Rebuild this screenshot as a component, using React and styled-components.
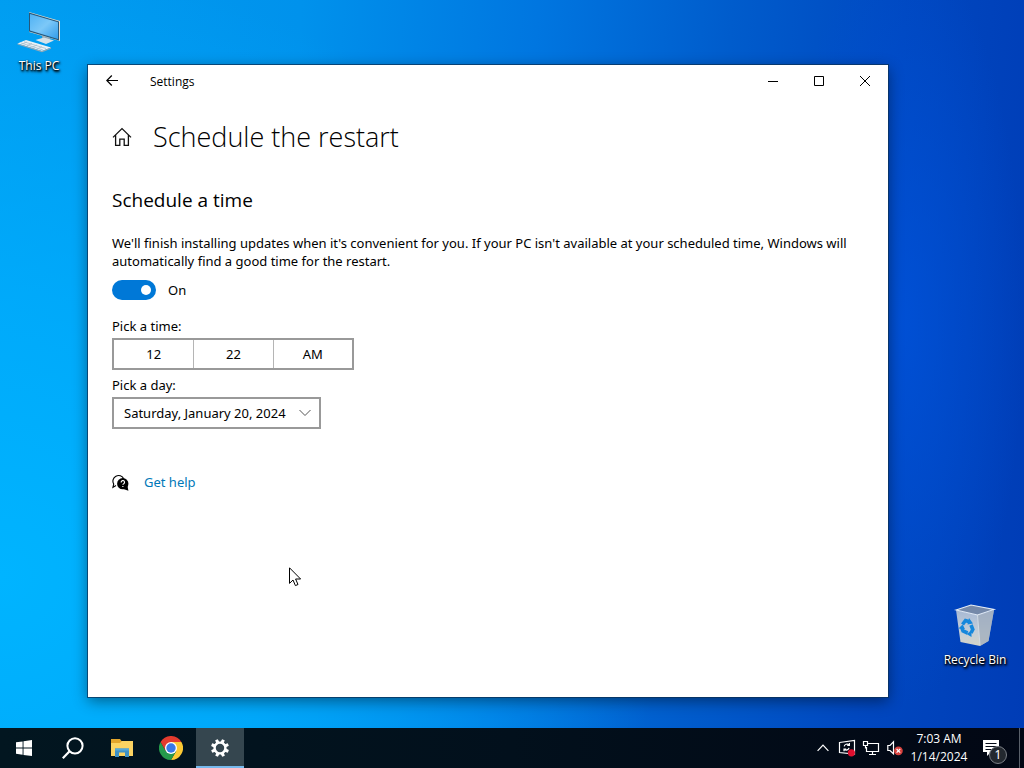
import React, { useState } from "react";
import styled, { createGlobalStyle } from "styled-components";

const days = [
  "Sunday, January 14, 2024",
  "Monday, January 15, 2024",
  "Tuesday, January 16, 2024",
  "Wednesday, January 17, 2024",
  "Thursday, January 18, 2024",
  "Friday, January 19, 2024",
  "Saturday, January 20, 2024"
];

const SettingsWindow = () => {
  const [scheduled, setScheduled] = useState(true);
  const [day, setDay] = useState("Saturday, January 20, 2024");

  return (
    <Window>
      <TitleBar>
        <BackButton aria-label="Back">
          <svg width="12" height="12" viewBox="0 0 12 12">
            <path d="M12 5.5H.8M5.8 .5L.8 5.5L5.8 10.5" />
          </svg>
        </BackButton>
        <WindowTitle>Settings</WindowTitle>
        <CaptionButton aria-label="Minimize">
          <svg width="12" height="12" viewBox="0 0 12 12">
            <path d="M1 6.5H11" />
          </svg>
        </CaptionButton>
        <CaptionButton aria-label="Maximize">
          <svg width="12" height="12" viewBox="0 0 12 12">
            <path d="M1.5 1.5H10.5V10.5H1.5Z" />
          </svg>
        </CaptionButton>
        <CaptionButton aria-label="Close">
          <svg width="12" height="12" viewBox="0 0 12 12">
            <path d="M1 1L11 11M11 1L1 11" />
          </svg>
        </CaptionButton>
      </TitleBar>

      <Content>
        <Header>
          <HomeButton aria-label="Home">
            <svg width="20" height="20" viewBox="0 0 20 20">
              <path d="M1 10.4L10 1.6L19 10.4M3.6 8.2V18.4H7.8V12.2H12.2V18.4H16.4V8.2" />
            </svg>
          </HomeButton>
          <h1>Schedule the restart</h1>
        </Header>

        <h2>Schedule a time</h2>
        <Description>
          We'll finish installing updates when it's convenient for you. If your
          PC isn't available at your scheduled time, Windows will automatically
          find a good time for the restart.
        </Description>

        <ToggleLabel>
          <Toggle
            type="checkbox"
            role="switch"
            checked={scheduled}
            onChange={e => setScheduled(e.target.checked)}
          />
          {scheduled ? "On" : "Off"}
        </ToggleLabel>

        <FieldLabel as="div" id="time-label">
          Pick a time:
        </FieldLabel>
        <TimePicker role="group" aria-labelledby="time-label">
          <TimePart>12</TimePart>
          <TimePart>22</TimePart>
          <TimePart>AM</TimePart>
        </TimePicker>

        <FieldLabel htmlFor="day">Pick a day:</FieldLabel>
        <SelectWrap>
          <Select id="day" value={day} onChange={e => setDay(e.target.value)}>
            {days.map(d => (
              <option key={d}>{d}</option>
            ))}
          </Select>
          <svg width="12" height="8" viewBox="0 0 12 8">
            <path d="M.5 1L6 6.5L11.5 1" />
          </svg>
        </SelectWrap>

        <Help>
          <svg width="17" height="17" viewBox="0 0 18 18">
            <path
              d="M4.2 12.2L1 14.2L1.8 10.6A6 6 0 1 1 12.4 5"
              fill="none"
              stroke="#000"
              strokeWidth="1.2"
            />
            <path d="M12 16L17.4 17.8L16.4 12.6Z" />
            <circle cx="11.4" cy="10.2" r="6" />
            <path
              d="M9.7 9A1.8 1.8 0 1 1 12.4 10.3Q11.5 10.7 11.5 11.5M11.5 12.6V13.8"
              fill="none"
              stroke="#fff"
              strokeWidth="1.2"
            />
          </svg>
          <a href="#help">Get help</a>
        </Help>
      </Content>
    </Window>
  );
};

const ThisPc = () => (
  <DesktopIcon $left="0" $top="8px">
    <svg width="48" height="48" viewBox="0 0 48 48">
      <defs>
        <linearGradient id="screen" x1="0" y1="0" x2="1" y2="1">
          <stop offset="0" stopColor="#4fb2f4" />
          <stop offset=".5" stopColor="#7cc8f8" />
          <stop offset="1" stopColor="#329cea" />
        </linearGradient>
      </defs>
      <path d="M27 27L35 29.5V33L31 34L27 32Z" fill="#8fa8b8" />
      <path d="M14 4L45 13V33L14 24Z" fill="#eadfce" />
      <path d="M14 4.5L44 13.5V32.5L14 23.5Z" fill="#25587c" />
      <path d="M15 6L43 14.3V31L15 22.6Z" fill="url(#screen)" />
      <path d="M20.5 32L29 29.5L39 32.5L31 36Z" fill="#d5e2e9" />
      <path d="M2.5 35.5L11 32L36 39.5L27 43Z" fill="#e9f2f7" />
      <path d="M2.5 35.5V36.5L27 44.3L36 40.7V39.5L27 43Z" fill="#91a8b7" />
      <path
        d="M7 36L12 34M12 37.6L17 35.5M17 39.2L22 37M22 41L27 38.7M6 35L28 42M9 33.8L31 40.5"
        stroke="#a8bdca"
        strokeWidth=".8"
      />
    </svg>
    <span>This PC</span>
  </DesktopIcon>
);

const RecycleBin = () => (
  <DesktopIcon $right="10px" $bottom="59px">
    <svg width="48" height="48" viewBox="0 0 48 48">
      <defs>
        <linearGradient id="bin" x1="0" y1="0" x2="0" y2="1">
          <stop offset="0" stopColor="#a6b8d4" />
          <stop offset=".6" stopColor="#c4ced8" />
          <stop offset="1" stopColor="#d3d4c8" />
        </linearGradient>
      </defs>
      <path d="M5 8L9.5 40L29 44L37.5 39L43 8L26.5 13Z" fill="url(#bin)" />
      <path d="M26.5 13L43 8L37.5 39L29 44Z" fill="#9eabbb" opacity=".7" />
      <path d="M5 8L20 3L43 7.5L26.5 13Z" fill="#7589a9" />
      <path
        d="M5 8L20 3L43 7.5L26.5 13Z"
        fill="none"
        stroke="#e5edf6"
        strokeWidth="1.1"
      />
      <path d="M26.5 13L29 43" stroke="#d9e2ea" strokeWidth=".8" />
      <g fill="none" stroke="#1688dc" strokeWidth="3.6">
        <path d="M11.5 22.5L14.5 18.5L18.5 19.8" />
        <path d="M20 23L21.8 27.5L20 31" />
        <path d="M16.6 31L12 29L10.6 25" />
      </g>
      <path
        d="M18 16L22 21.5L16.5 22.5ZM20.5 28.5L15.5 32L20.5 35ZM7.5 26.5L11.5 22.5L14 27Z"
        fill="#1688dc"
      />
    </svg>
    <span>Recycle Bin</span>
  </DesktopIcon>
);

const Taskbar = () => (
  <Bar>
    <TaskButton aria-label="Start">
      <svg width="16" height="16" viewBox="0 0 16 16" fill="#fff">
        <path d="M0 2.3L6.6 1.4V7.6H0ZM7.5 1.2L16 0V7.6H7.5ZM0 8.5H6.6V14.7L0 13.8ZM7.5 8.5H16V16L7.5 14.9Z" />
      </svg>
    </TaskButton>
    <TaskButton aria-label="Search">
      <svg width="22" height="22" viewBox="0 0 22 22" fill="none">
        <circle cx="13" cy="8.8" r="7.6" stroke="#fff" strokeWidth="2" />
        <path d="M7.8 14L.8 21.2" stroke="#fff" strokeWidth="2.2" />
      </svg>
    </TaskButton>
    <TaskButton aria-label="File Explorer">
      <svg width="22" height="18" viewBox="0 0 22 18">
        <path d="M0 0H9L10.5 2H22V17H0Z" fill="#e3a62c" />
        <path d="M0 4H9L11 2H22V17H0Z" fill="#fcd462" />
        <path d="M4 18V9.5H18V18H14V13.5H8V18Z" fill="#3f92c5" />
        <path d="M4 9.5H18V11.5H4Z" fill="#56a9d9" />
      </svg>
    </TaskButton>
    <TaskButton aria-label="Google Chrome">
      <svg width="24" height="24" viewBox="0 0 24 24">
        <path d="M12 12L22.4 6A12 12 0 0 1 12 24L17.2 15Z" fill="#fcc934" />
        <path d="M12 12L17.2 15L12 24A12 12 0 0 1 1.6 6L6.8 15Z" fill="#259a4b" />
        <path d="M12 6H22.4L17.2 15L12 12Z" fill="#fcc934" />
        <path d="M1.6 6A12 12 0 0 1 22.4 6H12L6.8 15Z" fill="#e33b2e" />
        <circle cx="12" cy="12" r="6" fill="#fff" />
        <circle cx="12" cy="12" r="4.7" fill="#3979e8" />
      </svg>
    </TaskButton>
    <TaskButton aria-label="Settings" $active>
      <svg width="18" height="18" viewBox="-9 -9 18 18">
        <circle r="5.4" fill="none" stroke="#fff" strokeWidth="2.4" />
        {[22, 67, 112, 157, 202, 247, 292, 337].map(a => (
          <path
            key={a}
            d="M-1.7 -5.8L-1.4 -9H1.4L1.7 -5.8Z"
            fill="#fff"
            transform={`rotate(${a})`}
          />
        ))}
      </svg>
    </TaskButton>

    <Tray>
      <TrayButton aria-label="Show hidden icons">
        <svg width="12" height="8" viewBox="0 0 12 8">
          <path d="M.6 6.8L6 1.2L11.4 6.8" />
        </svg>
      </TrayButton>
      <TrayButton aria-label="Update status">
        <svg width="18" height="18" viewBox="0 0 18 18">
          <path d="M1.5 3.5L16.5 1.5V15L1.5 13.5Z" />
          <path d="M6.2 7.4A2.8 2.8 0 0 1 11 6M11.4 4V6.4H9.2M11 8.8A2.8 2.8 0 0 1 6.4 10.4M6 12.2V10H8.2" />
          <circle cx="13.4" cy="13.8" r="3.6" fill="#e0102f" stroke="none" />
        </svg>
      </TrayButton>
      <TrayButton aria-label="Network">
        <svg width="18" height="16" viewBox="0 0 18 16">
          <path d="M5.5 3.5H16.5V11.5H4.5V7M7 14.5H14M10.5 11.5V14.5" />
          <path d="M1.5 1.5H5.5V5.5H1.5ZM3.5 5.5V8.5" />
        </svg>
      </TrayButton>
      <TrayButton aria-label="Volume muted">
        <svg width="16" height="16" viewBox="0 0 16 16">
          <path d="M.8 5.5H3L6.5 1.8V13.8L3 10.5H.8Z" />
          <circle cx="11.4" cy="10.8" r="4.4" fill="#d8423e" stroke="none" />
          <path d="M9.6 9L13.2 12.6M13.2 9L9.6 12.6" />
        </svg>
      </TrayButton>
      <Clock>
        <span>7:03 AM</span>
        <span>1/14/2024</span>
      </Clock>
      <Notifications aria-label="Notifications">
        <svg width="18" height="18" viewBox="0 0 18 18">
          <path d="M1 1H17V13H9L5 17V13H1Z" fill="#fff" />
          <path d="M3.5 4.5H14.5M3.5 7.5H14.5M3.5 10.5H10" stroke="#050b18" />
        </svg>
        <Badge>1</Badge>
      </Notifications>
      <ShowDesktop aria-label="Show desktop" />
    </Tray>
  </Bar>
);

const Pointer = () => (
  <Cursor width="13" height="20" viewBox="0 0 13 20" aria-hidden="true">
    <path d="M.5 .8V16.4L4 13L6.4 18.6L9 17.5L6.6 12H11.6Z" />
  </Cursor>
);

const App = () => (
  <Screen>
    <GlobalStyle />
    <Desktop>
      <ThisPc />
      <RecycleBin />
      <SettingsWindow />
      <Pointer />
    </Desktop>
    <Taskbar />
  </Screen>
);

export default App;

// styles

const GlobalStyle = createGlobalStyle`
  * {
    box-sizing: border-box;
  }

  body {
    margin: 0;
    font-family: "Noto Sans", "Open Sans", sans-serif;
    font-size: 13px;
    line-height: 18px;
    color: #000;
  }

  button,
  select,
  input {
    margin: 0;
    font: inherit;
    color: inherit;
  }

  svg {
    display: block;
    flex-shrink: 0;
  }
`;

const Screen = styled.div`
  display: flex;
  flex-direction: column;
  height: 100vh;
  overflow: hidden;
  background: radial-gradient(
      ellipse 65% 80% at 0% 75%,
      #00b4ff 0%,
      rgba(0, 176, 255, 0.7) 45%,
      rgba(0, 150, 245, 0) 100%
    ),
    radial-gradient(
      ellipse 12% 50% at 88% 42%,
      rgba(0, 82, 218, 0.8) 0%,
      rgba(0, 82, 218, 0) 100%
    ),
    linear-gradient(
      94deg,
      #009cf0 0%,
      #0092ec 28%,
      #0076e0 50%,
      #005ccc 68%,
      #0048c0 84%,
      #003cb6 100%
    );
`;

const Desktop = styled.main`
  position: relative;
  flex: 1;
`;

const DesktopIcon = styled.div`
  position: absolute;
  left: ${props => props.$left};
  right: ${props => props.$right};
  top: ${props => props.$top};
  bottom: ${props => props.$bottom};
  display: flex;
  flex-direction: column;
  align-items: center;
  min-width: 78px;
  font-family: "Open Sans", sans-serif;
  font-size: 12px;
  color: #fff;
  text-shadow: 1px 1px 2px #000, 0 1px 2px #000, 1px 2px 3px #000;

  svg {
    margin-bottom: 1px;
  }
`;

const Window = styled.section`
  position: absolute;
  top: 65px;
  right: 136px;
  bottom: 31px;
  left: 88px;
  background: #fff;
  box-shadow: 0 0 0 1px rgba(10, 50, 90, 0.75), 0 4px 14px rgba(0, 0, 0, 0.45);
`;

const TitleBar = styled.header`
  display: flex;
  height: 33px;
`;

const CaptionButton = styled.button`
  display: flex;
  align-items: center;
  justify-content: center;
  width: 46px;
  height: 32px;
  padding: 0;
  border: none;
  background: none;

  path {
    fill: none;
    stroke: #000;
  }
`;

const BackButton = styled(CaptionButton)`
  width: 48px;

  path {
    stroke-width: 1.2;
  }
`;

const WindowTitle = styled.span`
  flex: 1;
  padding-left: 14px;
  font-family: "Open Sans", sans-serif;
  font-size: 12px;
  line-height: 33px;
`;

const Content = styled.div`
  padding: 21px 24px;

  h2 {
    margin: 33px 0 22px;
    font-family: "Open Sans", sans-serif;
    font-size: 19px;
    font-weight: 400;
    line-height: 24px;
  }
`;

const Header = styled.div`
  display: flex;
  align-items: center;
  gap: 21px;

  h1 {
    margin: 0;
    font-family: "Open Sans", sans-serif;
    font-size: 27px;
    font-weight: 300;
    line-height: 36px;
  }
`;

const HomeButton = styled.button`
  padding: 0;
  border: none;
  background: none;

  path {
    fill: none;
    stroke: #111;
    stroke-width: 1.3;
  }
`;

const Description = styled.p`
  margin: 0 0 10px;
`;

const ToggleLabel = styled.label`
  display: flex;
  align-items: center;
  gap: 12px;
  width: fit-content;
  height: 20px;
  margin-bottom: 17px;
`;

const Toggle = styled.input`
  appearance: none;
  display: flex;
  align-items: center;
  justify-content: ${props => (props.checked ? "flex-end" : "flex-start")};
  width: 44px;
  height: 20px;
  padding: 0 5px;
  border-radius: 10px;
  background: ${props => (props.checked ? "#0078d7" : "#999")};

  &::before {
    content: "";
    width: 10px;
    height: 10px;
    border-radius: 50%;
    background: #fff;
  }
`;

const FieldLabel = styled.label`
  display: block;
  margin-bottom: 3px;
`;

const TimePicker = styled.div`
  display: grid;
  grid-template-columns: repeat(3, 1fr);
  width: 242px;
  height: 32px;
  margin-bottom: 6px;
  border: 2px solid #999;
`;

const TimePart = styled.button`
  padding: 0;
  border: none;
  background: none;

  & + & {
    border-left: 1px solid #b5b5b5;
  }
`;

const SelectWrap = styled.div`
  position: relative;
  width: 209px;

  svg {
    position: absolute;
    top: 12px;
    right: 10px;
    pointer-events: none;
  }

  path {
    fill: none;
    stroke: #555;
  }
`;

const Select = styled.select`
  appearance: none;
  width: 100%;
  height: 32px;
  padding: 0 28px 0 10px;
  border: 2px solid #999;
  border-radius: 0;
  background: #fff;
`;

const Help = styled.div`
  display: flex;
  align-items: center;
  gap: 15px;
  margin-top: 44px;

  a {
    color: #0078b8;
    text-decoration: none;
  }
`;

const Cursor = styled.svg`
  position: absolute;
  top: 567px;
  left: 289px;
  fill: #fff;
  stroke: #000;
`;

const Bar = styled.footer`
  display: flex;
  gap: 1px;
  height: 40px;
  background: linear-gradient(90deg, #021620 0%, #02101c 50%, #020714 100%);
  color: #fff;
`;

const TaskButton = styled.button`
  display: flex;
  align-items: center;
  justify-content: center;
  width: 48px;
  padding: 0;
  border: none;
  background: ${props => (props.$active ? "#35464f" : "none")};
  box-shadow: ${props => (props.$active ? "inset 0 -2px #76b9ed" : "none")};
`;

const Tray = styled.div`
  display: flex;
  margin-left: auto;
`;

const TrayButton = styled.button`
  display: flex;
  align-items: center;
  justify-content: center;
  width: 24px;
  padding: 0;
  border: none;
  background: none;

  path {
    fill: none;
    stroke: #fff;
    stroke-width: 1.2;
  }
`;

const Clock = styled.time`
  display: flex;
  flex-direction: column;
  align-items: center;
  justify-content: center;
  width: 64px;
  font-family: "Open Sans", sans-serif;
  font-size: 12px;
`;

const Notifications = styled.button`
  position: relative;
  display: flex;
  align-items: center;
  justify-content: center;
  width: 48px;
  padding: 0 8px 0 0;
  border: none;
  background: none;
`;

const Badge = styled.span`
  position: absolute;
  right: 12px;
  bottom: 4px;
  width: 18px;
  height: 18px;
  border: 1px solid #7b7f86;
  border-radius: 50%;
  background: #23282f;
  color: #fff;
  font-size: 12px;
  line-height: 16px;
  text-align: center;
`;

const ShowDesktop = styled.button`
  width: 5px;
  padding: 0;
  border: none;
  border-left: 1px solid #5a606a;
  background: none;
`;
